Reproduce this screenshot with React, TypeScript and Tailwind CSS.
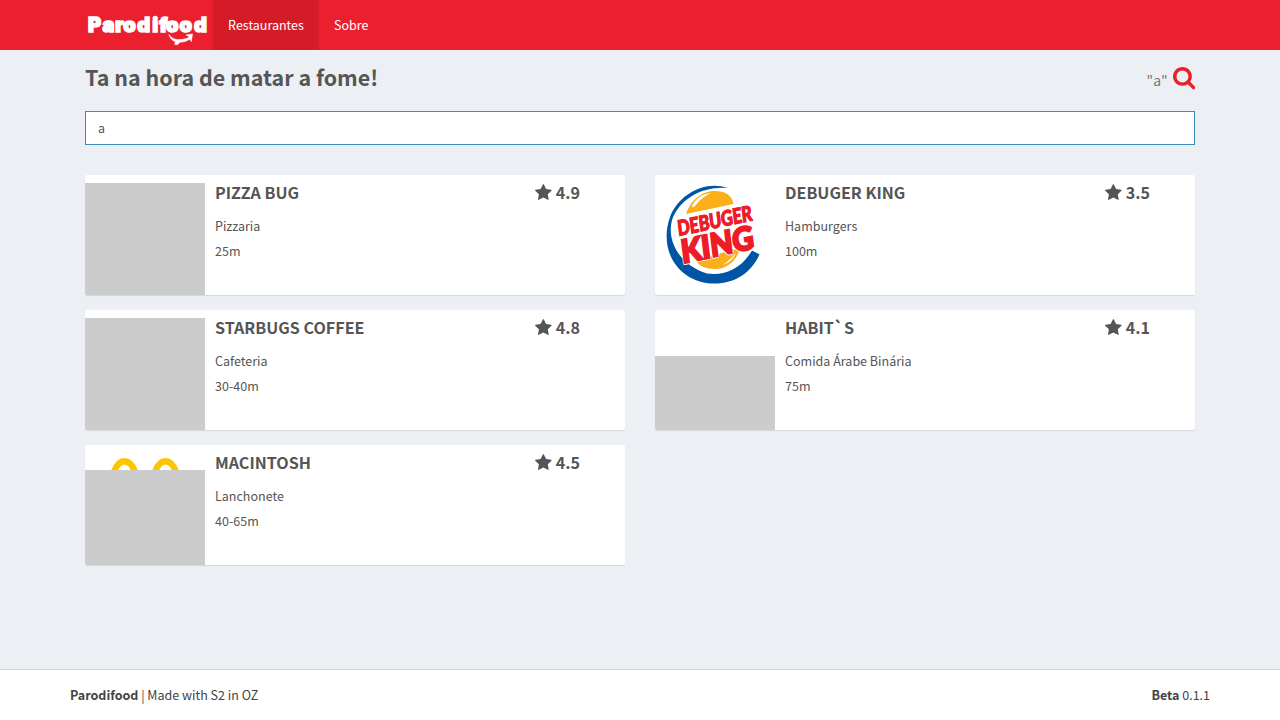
import { ReactNode } from 'react';

function SearchIcon() {
  return (
    <svg viewBox="0 128 1664 1664" className="h-[22.3px] w-[22.3px] shrink-0" fill="#eb1f2d" aria-hidden="true">
      <path d="M1152 832q0-185-131.5-316.5t-316.5-131.5-316.5 131.5-131.5 316.5 131.5 316.5 316.5 131.5 316.5-131.5 131.5-316.5zm512 832q0 52-38 90t-90 38q-54 0-90-38l-343-342q-179 124-399 124-143 0-273.5-55.5t-225-150-150-225-55.5-273.5 55.5-273.5 150-225 225-150 273.5-55.5 273.5 55.5 225 150 150 225 55.5 273.5q0 220-124 399l343 343q37 37 37 90z" />
    </svg>
  );
}

function StarIcon() {
  return (
    <svg viewBox="64 32 1664 1587" className="mb-px h-4 w-[16.7px] shrink-0 fill-[#555]" aria-hidden="true">
      <path d="M1728 647q0 22-26 48l-363 354 86 500q1 7 1 20 0 21-10.5 35.5t-30.5 14.5q-19 0-40-12l-449-236-449 236q-22 12-40 12-21 0-31.5-14.5t-10.5-35.5q0-6 2-20l86-500-364-354q-25-27-25-48 0-37 56-46l502-73 225-455q19-41 49-41t49 41l225 455 502 73q56 9 56 46z" />
    </svg>
  );
}

function Logo() {
  return (
    <svg viewBox="0 0 128 50" className="h-[50px] w-32 shrink-0" fill="#fff" aria-label="Parodifood">
      <text x="3 17.5 30 38.3 52.3 67.3 74.3 81 94.5 109" y="31.5" fontFamily="Inter, sans-serif" fontWeight="900" fontSize="20" stroke="#fff" strokeWidth="1.4">
        Parodifood
      </text>
      <path d="M84.5 34.5C87 38.5 91 40 95 39.6C100 39.4 103 38.6 105 36.8L101.5 35L108 34L106.8 41.5L105.2 39.2C102 41.3 99 42 95.5 42.3L92.8 44.8L90.3 44.5L90.8 41.8C87.5 40.3 85.3 38 84.5 34.5Z" transform="translate(-.5 0)" stroke="#fff" strokeWidth=".6" />
    </svg>
  );
}

function DebugerKing() {
  return (
    <svg viewBox="0 0 120 120" className="h-[120px] w-[120px] overflow-visible" aria-label="Debuger King">
      <path d="M73 13C50 5 24 19 15 42C3 76 24 108 59 108.6C82 108.5 97 96 104.5 79.5L97 75.5C86 94 70 101 52 98.5C27 91 11 68 17 45C25 23 48 11 73 13Z" fill="#0054a6" />
      <path d="M31 39C36 23 49 16 60 16C70 16 77 20 78.500 29Z" fill="#faaf1b" />
      <path d="M36.500 32C41 23 48 18.500 56 18C48 22 44 26 39.500 31.500Z" fill="#fff" />
      <path d="M41 85L85 73C82 85 73 94 60 94C51 94 43 91 41 85Z" fill="#faaf1b" />
      <path d="M68 90C75 87.500 79 83 81 77.500C77 83 73 86 68 90Z" fill="#fff" />
      <g fontFamily="Lato, sans-serif" fontWeight="900" fill="#ee1c27" stroke="#fff" strokeWidth="3.8" strokeLinejoin="round" style={{ paintOrder: 'stroke' }}>
        <text transform="translate(23.500 61) rotate(-12) skewX(-5)" fontSize="21" textLength="76" lengthAdjust="spacingAndGlyphs">DEBUGER</text>
        <text transform="translate(27.500 88.500) rotate(-12) skewX(-5)" fontSize="32" textLength="74" lengthAdjust="spacingAndGlyphs">KING</text>
      </g>
      <g fontFamily="Lato, sans-serif" fontWeight="900" fill="#ee1c27" stroke="#ee1c27" strokeWidth="1.1" aria-hidden="true">
        <text transform="translate(23.500 61) rotate(-12) skewX(-5)" fontSize="21" textLength="76" lengthAdjust="spacingAndGlyphs">DEBUGER</text>
        <text transform="translate(27.500 88.500) rotate(-12) skewX(-5)" fontSize="32" strokeWidth="2.2" textLength="74" lengthAdjust="spacingAndGlyphs">KING</text>
      </g>
    </svg>
  );
}

function Arches() {
  return (
    <svg viewBox="0 0 120 26" className="h-[26px] w-[120px]" aria-hidden="true">
      <path d="M28.5 28C31.5 19.5 35 16.3 39.5 16.3S47.5 19.5 50.5 28M69.500 28C72.500 19.5 76 16.3 80.5 16.3S88.5 19.500 91.5 28" fill="none" stroke="#ffc400" strokeWidth="6.5" />
    </svg>
  );
}

type Restaurant = { name: string; rating: string; kind: string; time: string; picture: ReactNode };

const restaurants: Restaurant[] = [
  { name: 'PIZZA BUG', rating: '4.9', kind: 'Pizzaria', time: '25m', picture: <div className="mt-2 flex-1 bg-[#ccc]" /> },
  { name: 'DEBUGER KING', rating: '3.5', kind: 'Hamburgers', time: '100m', picture: <DebugerKing /> },
  { name: 'STARBUGS COFFEE', rating: '4.8', kind: 'Cafeteria', time: '30-40m', picture: <div className="mt-2 flex-1 bg-[#ccc]" /> },
  { name: 'HABIT`S', rating: '4.1', kind: 'Comida Árabe Binária', time: '75m', picture: <div className="mt-[46px] flex-1 bg-[#ccc]" /> },
  {
    name: 'MACINTOSH', rating: '4.5', kind: 'Lanchonete', time: '40-65m',
    picture: (
      <>
        <Arches />
        <div className="-mt-px flex-1 bg-[#ccc]" />
      </>
    ),
  },
];

function Card({ name, rating, kind, time, picture }: Restaurant) {
  return (
    <article className="flex h-[120px] overflow-hidden rounded-[2px] bg-white shadow-[0_1px_1px_rgba(0,0,0,0.1)]">
      <div className="flex w-[120px] shrink-0 flex-col">{picture}</div>
      <div className="flex-1 pl-2.5 pr-[45px] pt-1">
        <div className="flex h-[26px] items-center justify-between text-[16.1px] font-bold">
          <h2>{name}</h2>
          <span className="flex items-center gap-1">
            <StarIcon />
            {rating}
          </span>
        </div>
        <p className="mt-2 text-[12.52px] leading-[25px]">{kind}</p>
        <p className="text-[12.52px] leading-[25px]">{time}</p>
      </div>
    </article>
  );
}

export default function App() {
  return (
    <div className="flex h-screen flex-col overflow-hidden bg-[#ecf0f5] font-['Noto_Sans_CJK_JP','Noto_Sans_CJK_SC',sans-serif] text-[12.5px] leading-5 text-[#555]">
      <header className="flex h-[50px] shrink-0 bg-[#eb1f2d] pl-[85px] text-white">
        <Logo />
        <a className="flex w-[106px] items-center justify-center bg-[#d41c28]">Restaurantes</a>
        <a className="flex items-center px-[15px]">Sobre</a>
      </header>
      <main className="mx-auto w-[1110px] flex-1">
        <div className="flex h-[61px] items-center justify-between pb-1">
          <h1 className="-mt-1 text-[21.45px] font-bold leading-7">Ta na hora de matar a fome!</h1>
          <div className="flex items-center gap-[5px] text-sm text-[#777]">
            <span className="pt-[3px]">"a"</span>
            <SearchIcon />
          </div>
        </div>
        <div className="flex h-[34px] items-center border border-[#3c8dbc] bg-white px-3">a</div>
        <section className="mt-[30px] grid grid-cols-2 gap-x-[30px] gap-y-[15px]">
          {restaurants.map((r) => (
            <Card key={r.name} {...r} />
          ))}
        </section>
      </main>
      <footer className="flex h-[51px] shrink-0 items-center justify-between border-t border-[#d2d6de] bg-white px-[70px] text-[#444]">
        <span><b>Parodifood</b> | Made with S2 in OZ</span>
        <span><b>Beta</b> 0.1.1</span>
      </footer>
    </div>
  );
}
